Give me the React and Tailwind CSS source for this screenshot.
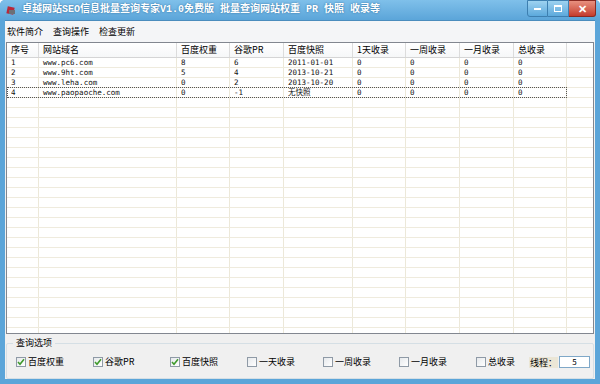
import React from "react";

const cols = [
  { label: "序号", w: "w-[32px]" },
  { label: "网站域名", w: "w-[138px]" },
  { label: "百度权重", w: "w-[53px]" },
  { label: "谷歌PR", w: "w-[54px]" },
  { label: "百度快照", w: "w-[69px]" },
  { label: "1天收录", w: "w-[53px]" },
  { label: "一周收录", w: "w-[54px]" },
  { label: "一月收录", w: "w-[54px]" },
  { label: "总收录", w: "w-[53px]" },
];

const rows = [
  ["1", "www.pc6.com", "8", "6", "2011-01-01", "0", "0", "0", "0"],
  ["2", "www.9ht.com", "5", "4", "2013-10-21", "0", "0", "0", "0"],
  ["3", "www.leha.com", "0", "2", "2013-10-20", "0", "0", "0", "0"],
  ["4", "www.paopaoche.com", "0", "-1", "无快照", "0", "0", "0", "0"],
];

const options = [
  { label: "百度权重", on: true, w: "w-[77px]" },
  { label: "谷歌PR", on: true, w: "w-[77px]" },
  { label: "百度快照", on: true, w: "w-[77px]" },
  { label: "一天收录", on: false, w: "w-[76px]" },
  { label: "一周收录", on: false, w: "w-[76px]" },
  { label: "一月收录", on: false, w: "w-[77px]" },
  { label: "总收录", on: false, w: "w-[53px]" },
];

const cjk = "font-['Noto_Sans_CJK_SC',sans-serif]";
const mono = "font-['Liberation_Mono','Noto_Sans_CJK_SC',monospace]";
const dmono = "font-['DejaVu_Sans_Mono','Noto_Sans_CJK_SC',monospace]";

function CheckBox({ on }) {
  return (
    <span className="w-[10px] h-[10px] border border-[#8f9aa6] bg-gradient-to-br from-[#e6e9ec] to-white flex items-center justify-center">
      {on && (
        <svg width="8" height="8" viewBox="0 0 8 8">
          <path d="M1 4 L3 6.2 L7 1.2" fill="none" stroke="#3f9a2c" strokeWidth="1.6" />
        </svg>
      )}
    </span>
  );
}

function Row({ cells, selected }) {
  return (
    <div className="relative flex h-[10px] border-b border-[#efebdd] shrink-0">
      {cols.map((c, i) => (
        <div
          key={i}
          className={`${c.w} shrink-0 border-r border-[#ece8d9] pl-[4px] leading-[10px] text-[7.5px] text-[#111] ${dmono} overflow-hidden whitespace-nowrap`}
        >
          {cells ? cells[i] : ""}
        </div>
      ))}
      <div className="flex-1" />
      {selected && (
        <div className="absolute left-0 top-[-1px] w-[560px] h-[11px] border border-dotted border-[#555]" />
      )}
    </div>
  );
}

export default function App() {
  const empty = Array.from({ length: 24 });
  return (
    <div className={`w-[600px] h-[384px] bg-[#5ba5d9] flex flex-col px-[5px] pb-[5px] rounded-t-[5px] ${cjk}`}>
      {/* title bar */}
      <div className="h-[20px] flex items-start -mx-[5px] px-[5px] rounded-t-[5px] bg-gradient-to-b from-[#7fc0ea] to-[#5ba5d9]">
        <div className="mt-[6px] ml-[1px] w-[10px] h-[9px] relative">
          <div className="absolute left-[1px] top-[1px] w-[7px] h-[7px] bg-[#b8283a] rotate-12" />
          <div className="absolute left-[3px] top-[4px] w-[6px] h-[4px] bg-[#6c7077]" />
        </div>
        <div className={`ml-[6px] mt-[4px] text-[10px] leading-[12px] font-bold text-white whitespace-nowrap [text-shadow:0_0_2px_#2a6a9a] ${mono}`}>
          卓越网站SEO信息批量查询专家V1.0免费版 批量查询网站权重 PR 快照 收录等
        </div>
        <div className="flex-1" />
        <div className="flex h-[17px] -mr-[1px]">
          <div className="w-[21px] border border-[#3d7fb0] rounded-bl-[3px] bg-gradient-to-b from-[#9dd2f0] to-[#5ca9dc] flex items-center justify-center">
            <div className="w-[7px] h-[2px] bg-white mt-[1px]" />
          </div>
          <div className="w-[21px] border-y border-r border-[#3d7fb0] bg-gradient-to-b from-[#9dd2f0] to-[#5ca9dc] flex items-center justify-center">
            <div className="w-[8px] h-[7px] border border-white border-t-2" />
          </div>
          <div className="w-[27px] border-y border-r border-[#8a2a22] rounded-br-[3px] bg-gradient-to-b from-[#e8907f] to-[#c43a2c] flex items-center justify-center text-white text-[11px] font-bold leading-none">
            ✕
          </div>
        </div>
      </div>

      {/* client */}
      <div className="flex-1 bg-[#f0f0f0] flex flex-col border-t border-[#4a8cbd]">
        {/* menu */}
        <div className="h-[21px] flex items-center gap-[10px] pl-[2px] text-[9px] text-black bg-[#f4f5f7]">
          <span>软件简介</span>
          <span>查询操作</span>
          <span>检查更新</span>
        </div>

        {/* table */}
        <div className="mx-[1px] h-[292px] border border-[#828790] bg-white flex flex-col overflow-hidden">
          <div className="h-[15px] flex border-b border-[#d5d5d5] bg-gradient-to-b from-white to-[#f6f7f8] shrink-0">
            {cols.map((c, i) => (
              <div
                key={i}
                className={`${c.w} shrink-0 border-r border-[#dcdcdc] pl-[4px] text-[9px] leading-[14px] text-black whitespace-nowrap`}
              >
                {c.label}
              </div>
            ))}
            <div className="flex-1" />
          </div>
          {rows.map((r, i) => (
            <Row key={i} cells={r} selected={i === 3} />
          ))}
          {empty.map((_, i) => (
            <Row key={"e" + i} />
          ))}
        </div>

        {/* options group */}
        <div className="relative mt-[9px] flex-1 mx-[1px] border border-[#d5dfe5] rounded-[2px]">
          <span className="absolute left-[6px] top-[-7px] px-[3px] bg-[#f0f0f0] text-[9px] leading-[12px] text-black">
            查询选项
          </span>
          <div className="flex items-center h-full pl-[9px] pt-[2px] text-[9px] text-black">
            {options.map((o, i) => (
              <div key={i} className={`${o.w} flex items-center gap-[2px] shrink-0`}>
                <CheckBox on={o.on} />
                <span>{o.label}</span>
              </div>
            ))}
            <span className="bg-[#ebe6d6] px-[1px] leading-[11px]">线程：</span>
            <div className="ml-[1px] w-[31px] h-[12px] border border-[#7fa8c8] bg-white text-[8px] leading-[10px] text-center">
              5
            </div>
          </div>
        </div>
      </div>
    </div>
  );
}
